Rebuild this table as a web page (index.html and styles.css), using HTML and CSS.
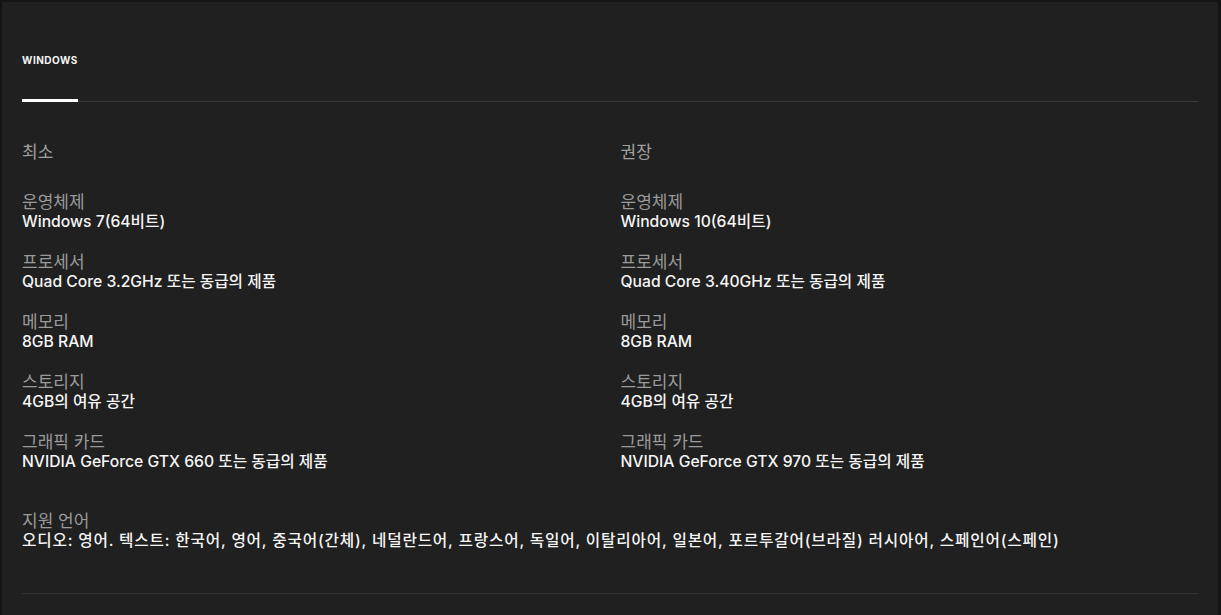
FILE: index.html
```html
<!DOCTYPE html>
<html lang="ko">

<head>
    <meta charset="UTF-8">
    <meta name="viewport" content="width=device-width, initial-scale=1.0">
    <title>시스템 요구 사항</title>
    <link rel="stylesheet" href="styles.css">
</head>

<body>
    <div class="specs-card">
        <!-- Platform Tabs -->
        <div class="tabs">
            <span class="tab active">Windows</span>
        </div>

        <!-- Requirements -->
        <div class="specs-grid">
            <div class="spec-col">
                <h3 class="col-title">최소</h3>
                <div class="spec">
                    <div class="spec-label">운영체제</div>
                    <div class="spec-value">Windows 7(64비트)</div>
                </div>
                <div class="spec">
                    <div class="spec-label">프로세서</div>
                    <div class="spec-value">Quad Core 3.2GHz 또는 동급의 제품</div>
                </div>
                <div class="spec">
                    <div class="spec-label">메모리</div>
                    <div class="spec-value">8GB RAM</div>
                </div>
                <div class="spec">
                    <div class="spec-label">스토리지</div>
                    <div class="spec-value">4GB의 여유 공간</div>
                </div>
                <div class="spec">
                    <div class="spec-label">그래픽 카드</div>
                    <div class="spec-value">NVIDIA GeForce GTX 660 또는 동급의 제품</div>
                </div>
            </div>

            <div class="spec-col">
                <h3 class="col-title">권장</h3>
                <div class="spec">
                    <div class="spec-label">운영체제</div>
                    <div class="spec-value">Windows 10(64비트)</div>
                </div>
                <div class="spec">
                    <div class="spec-label">프로세서</div>
                    <div class="spec-value">Quad Core 3.40GHz 또는 동급의 제품</div>
                </div>
                <div class="spec">
                    <div class="spec-label">메모리</div>
                    <div class="spec-value">8GB RAM</div>
                </div>
                <div class="spec">
                    <div class="spec-label">스토리지</div>
                    <div class="spec-value">4GB의 여유 공간</div>
                </div>
                <div class="spec">
                    <div class="spec-label">그래픽 카드</div>
                    <div class="spec-value">NVIDIA GeForce GTX 970 또는 동급의 제품</div>
                </div>
            </div>
        </div>

        <!-- Languages -->
        <div class="spec languages">
            <div class="spec-label">지원 언어</div>
            <div class="spec-value">오디오: 영어. 텍스트: 한국어, 영어, 중국어(간체), 네덜란드어, 프랑스어, 독일어, 이탈리아어, 일본어, 포르투갈어(브라질) 러시아어, 스페인어(스페인)</div>
        </div>
    </div>
</body>

</html>
```

FILE: styles.css
```css
/* General Styles */
body {
    margin: 0;
    padding: 2px 3px 0 2px;
    background: #141414;
    font-family: 'Inter', 'Noto Sans CJK KR', sans-serif;
    color: #f5f5f5;
}

/* Card */
.specs-card {
    background: #202020;
    padding: 0 20px;
    min-height: 613px;
    box-sizing: border-box;
}

/* Tabs */
.tabs {
    padding-top: 52px;
    border-bottom: 1px solid #3a3a3a;
    display: flex;
}

.tab {
    font-size: 10px;
    font-weight: 700;
    letter-spacing: 0.5px;
    text-transform: uppercase;
    color: #f5f5f5;
    padding-bottom: 33px;
    border-bottom: 3px solid #fff;
    margin-bottom: -1px;
    line-height: 12px;
}

/* Requirement columns */
.specs-grid {
    display: grid;
    grid-template-columns: 1fr 1fr;
    column-gap: 21px;
    padding-top: 40px;
}

.col-title {
    margin: 0 0 30px 0;
    font-size: 17px;
    font-weight: 400;
    line-height: 20px;
    color: #a0a0a0;
}

.spec {
    margin-bottom: 20px;
}

.spec-label {
    font-size: 17px;
    line-height: 20px;
    color: #9a9a9a;
}

.spec-value {
    font-size: 15.7px;
    font-weight: 500;
    line-height: 20px;
    color: #f5f5f5;
}

/* Languages */
.languages {
    margin-top: 19px;
    padding-bottom: 42px;
    border-bottom: 1px solid #333;
}

.languages .spec-value {
    letter-spacing: 0.8px;
}
```
